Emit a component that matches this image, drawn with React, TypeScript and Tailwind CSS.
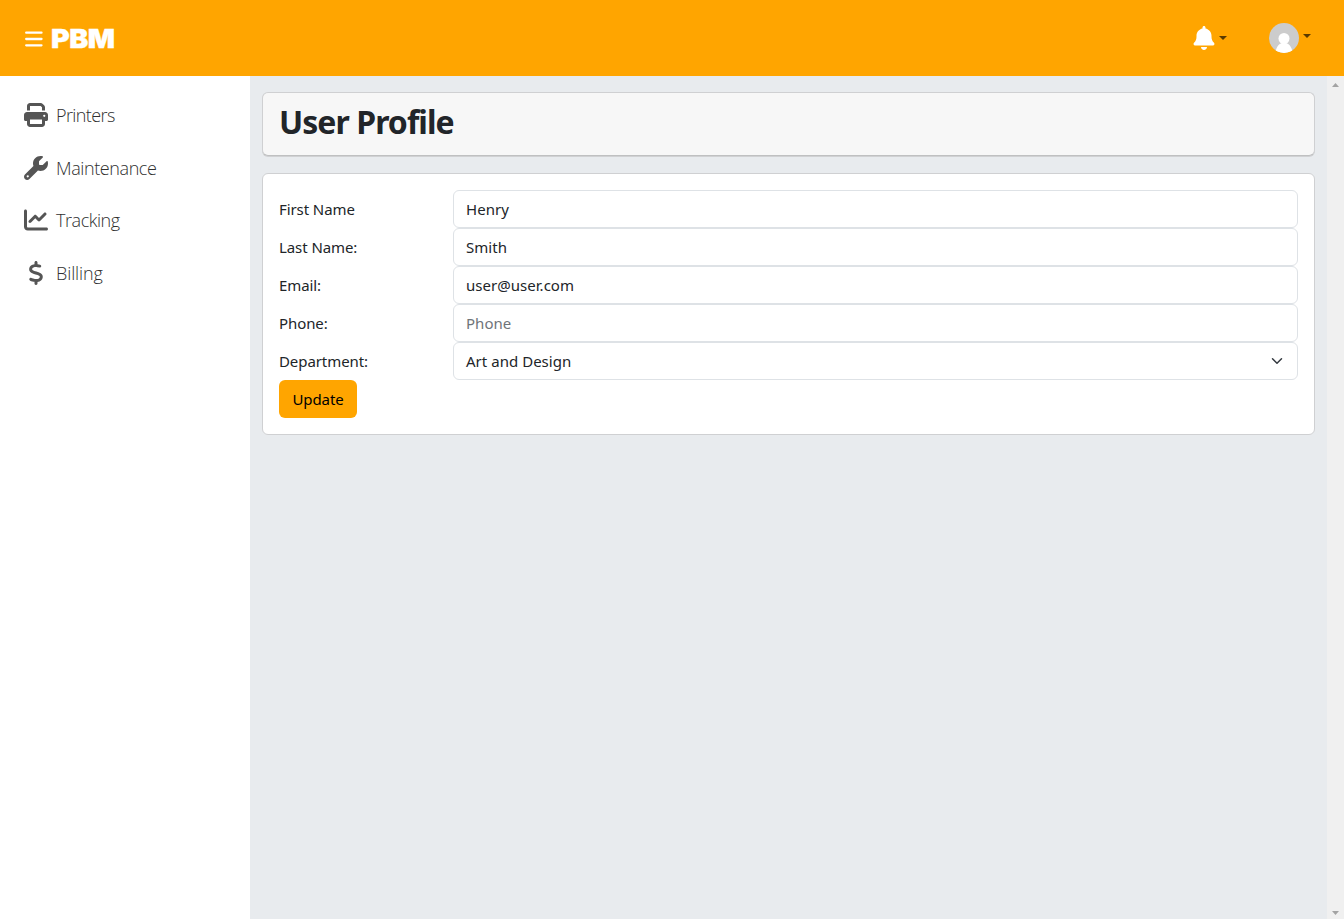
import type { ReactNode } from "react";
import { FaBell, FaChartLine, FaDollarSign, FaPrint, FaWrench } from "react-icons/fa6";

const navItems: { label: string; icon: ReactNode; text: string }[] = [
  { label: "Printers", icon: <FaPrint size={24} />, text: "tracking-[-0.6px]" },
  { label: "Maintenance", icon: <FaWrench size={24} />, text: "tracking-[-0.4px]" },
  { label: "Tracking", icon: <FaChartLine size={24} />, text: "tracking-[-0.45px]" },
  { label: "Billing", icon: <FaDollarSign size={24} />, text: "tracking-[-0.1px]" },
];

const fields = [
  { label: "First Name", value: "Henry" },
  { label: "Last Name:", value: "Smith" },
  { label: "Email:", value: "user@user.com" },
  { label: "Phone:", value: "", placeholder: "Phone" },
];

const control =
  "h-[38px] w-full rounded-md border border-[#dee2e6] bg-white px-3 text-[#212529] tracking-[0.03px] placeholder:text-[#6f7479] outline-none";

function Caret({ className }: { className: string }) {
  return (
    <svg className={className} width="8" height="4" viewBox="0 0 8 4">
      <path d="M0 0h8L4 4z" />
    </svg>
  );
}

export default function App() {
  return (
    <div className="flex h-screen flex-col overflow-hidden bg-white font-['Noto_Sans',sans-serif] text-[15px] leading-6 tracking-[-0.08px] text-[#212529]">
      <header className="flex h-[76px] shrink-0 items-center bg-[#ffa500] pl-[25px] pr-[33px]">
        <svg width="18" height="16" viewBox="0 0 18 16" stroke="#fff" strokeWidth="2.3" strokeLinecap="round" className="mt-[2px]">
          <path d="M1.200 1.700h15.300M1.200 8h15.300M1.200 14.300h15.300" />
        </svg>
        <span className="ml-[8px] mt-px origin-left scale-x-[1.1] font-['Inter',sans-serif] text-[26px] font-black leading-none tracking-[-0.5px] text-white [-webkit-text-stroke:0.3px_white]">
          PBM
        </span>
        <div className="ml-auto flex items-center">
          <FaBell size={24} color="#fff" />
          <Caret className="ml-[3px] fill-[#593a00]" />
          <svg className="ml-[42px]" width="30" height="30" viewBox="0 0 30 30">
            <defs>
              <clipPath id="avatar">
                <circle cx="15" cy="15" r="15" />
              </clipPath>
            </defs>
            <g clipPath="url(#avatar)">
              <path fill="#ccc" d="M0 0h30v30H0z" />
              <circle cx="15" cy="15.500" r="5.500" fill="#fff" />
              <path fill="#fff" d="M6.500 30c.3-5 2.800-9 6.500-10h4c3.700 1 6.200 5 6.500 10z" />
            </g>
          </svg>
          <Caret className="-mt-1 ml-1 fill-[#593a00]" />
        </div>
      </header>

      <div className="flex min-h-0 flex-1">
        <nav className="flex w-[250px] shrink-0 flex-col gap-[12.4px] px-6 pt-[19.4px]">
          {navItems.map((item) => (
            <a key={item.label} className="flex h-10 items-center gap-2 text-[#555]">
              <span className="flex w-6 justify-center">{item.icon}</span>
              <span className={`font-['Open_Sans',sans-serif] text-[18px] font-light text-[#303030] ${item.text}`}>{item.label}</span>
            </a>
          ))}
        </nav>

        <main className="flex flex-1 flex-col bg-[#e8ebee] px-3 pt-4">
          <div className="mb-[17px] h-16 rounded-md border border-[#cfd0d2] border-b-[#bfc0c1] bg-[#f7f7f7] px-4 pt-[10px] shadow-[0_1px_0_#d0d1d3]">
            <h1 className="text-[32px] font-bold leading-[38px] tracking-[-0.95px]">User Profile</h1>
          </div>
          <form className="rounded-md border border-[#cfd0d2] bg-white p-4">
            {fields.map((f) => (
              <div key={f.label} className="flex items-center">
                <label className="w-[174px] shrink-0">{f.label}</label>
                <input className={control} defaultValue={f.value} placeholder={f.placeholder} />
              </div>
            ))}
            <div className="flex items-center">
              <label className="w-[174px] shrink-0">Department:</label>
              <button type="button" className={`${control} flex items-center justify-between text-left`}>
                Art and Design
                <svg width="16" height="12" viewBox="0 0 16 16" fill="none" stroke="#343a40" strokeWidth="2" strokeLinecap="round" strokeLinejoin="round">
                  <path d="m2 5 6 6 6-6" />
                </svg>
              </button>
            </div>
            <button type="button" className="block h-[38px] w-[78px] rounded-md bg-[#ffa500] text-black">
              Update
            </button>
          </form>
        </main>

        <div className="flex w-[17px] shrink-0 flex-col items-center justify-between bg-[#f0f0f0] pb-1 pt-[7px]">
          <svg width="7" height="4" viewBox="0 0 7 4" fill="#a3a3a3">
            <path d="M0 4h7L3.500 0z" />
          </svg>
          <svg width="7" height="4" viewBox="0 0 7 4" fill="#a3a3a3">
            <path d="M0 0h7L3.500 4z" />
          </svg>
        </div>
      </div>
    </div>
  );
}
